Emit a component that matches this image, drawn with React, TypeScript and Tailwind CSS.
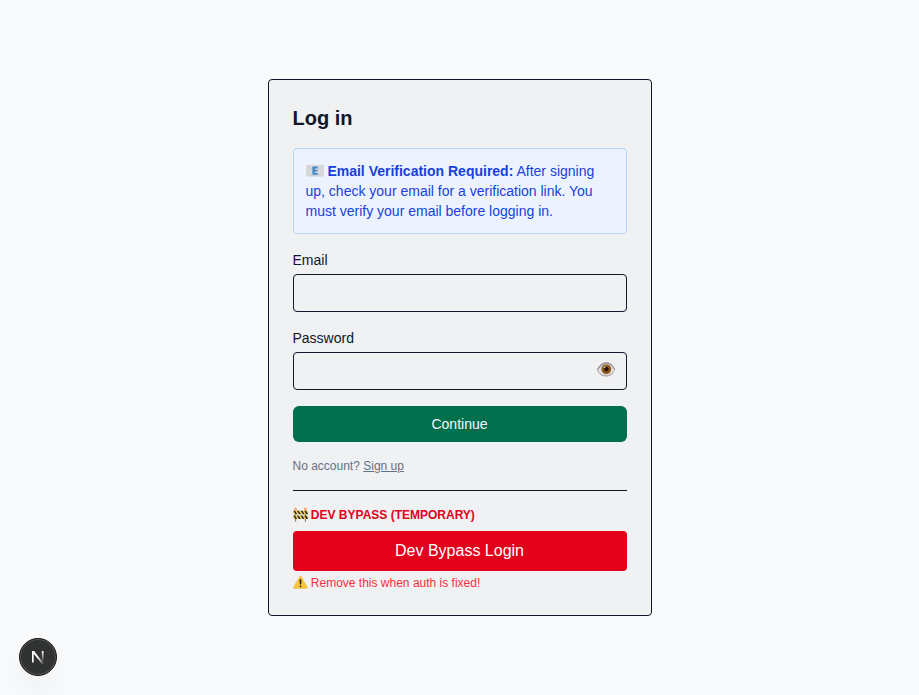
import React from "react";

function MailEmoji() {
  return (
    <svg className="inline-block h-[13px] w-[18px] align-[-1px]" viewBox="0 0 18 13" aria-hidden="true">
      <defs>
        <linearGradient id="paper" x1="0" y1="0" x2="0" y2="1">
          <stop offset="0" stopColor="#dfdfe1" />
          <stop offset="1" stopColor="#d0d0d2" />
        </linearGradient>
      </defs>
      <rect x="0.1" y="0.8" width="17.8" height="11.6" rx="0.8" fill="url(#paper)" />
      <path d="M0.6 12 6.6 6.4M17.4 12 11.2 6.4" stroke="#e9e9ea" strokeWidth="0.8" />
      <path d="M0.6 1.2 7.4 7.8q1.5 1.2 3 0l7-6.6" fill="#d8d8da" stroke="#bdbec0" strokeWidth="0.7" />
      <path d="M6.4 2.6h5.3v1.9H8.8v1.3h2.5v1.7H8.8v1.4h3v1.9H6.4z" fill="#438bcb" />
    </svg>
  );
}

function EyeEmoji() {
  return (
    <svg className="block h-[15px] w-[20px]" viewBox="0 0 20 15" aria-hidden="true">
      <defs>
        <radialGradient id="iris">
          <stop offset="0" stopColor="#30170a" />
          <stop offset="0.4" stopColor="#5b330e" />
          <stop offset="0.78" stopColor="#a56c1b" />
          <stop offset="1" stopColor="#61411f" />
        </radialGradient>
      </defs>
      <path d="M1 7.9C3.5 3.1 6.2.4 10.4.4c4.1 0 6.7 3 8.6 7.1-1.8 4.4-4.6 7-8.9 7-4.5 0-7.4-2.8-9.1-6.6Z" fill="#aea5a6" />
      <path d="M2 8.2C4.2 4.4 6.8 2 10.2 2c3.7 0 6.2 2.4 8 5.7-2 3.7-4.4 5.6-8.1 5.6-3.9 0-6.4-2.2-8.1-5.1Z" fill="#e9e2e3" />
      <circle cx="10.3" cy="7.3" r="4.9" fill="url(#iris)" />
      <circle cx="10.4" cy="6.8" r="2" fill="#29150d" />
      <circle cx="8.5" cy="5.2" r="0.9" fill="#c9bba9" />
      <path d="M1.2 7.7C3.6 3.4 6.4.9 10.4.9c3.8 0 6.3 2.6 8.3 6.6" fill="none" stroke="#857777" strokeWidth="0.8" />
    </svg>
  );
}

function BarrierEmoji() {
  return (
    <svg className="inline-block h-[15px] w-[15px] align-[-3px]" viewBox="0 0 15 15" aria-hidden="true">
      <path d="M2.6 3v11.7M12.4 3v11.7" stroke="#858279" strokeWidth="1.1" />
      <path d="M.2 3.8h14.6v3.5H.2zM.2 8.6h14.6v3.3H.2z" fill="#e8c958" />
      <path d="m.4 3.8 2.1 3.5h1.7L2.1 3.8zM4 3.8l2.1 3.5h1.7L5.7 3.8zM7.7 3.8l2.1 3.5h1.7L9.4 3.8zM11.3 3.8l2.1 3.5h1.4V6.5l-1.8-2.7zM.4 8.6l2 3.3h1.7l-2-3.3zM4 8.6l2 3.3h1.7l-2-3.3zM7.7 8.6l2 3.3h1.7l-2-3.3zM11.3 8.6l2 3.3h1.5v-.8L13 8.6z" fill="#2b2920" />
      <path d="M1.3 3.7V1.9q0-1.5 1.3-1.5t1.3 1.5v1.8zM11.1 3.7V1.9q0-1.5 1.3-1.5t1.3 1.5v1.8z" fill="#f5a568" />
    </svg>
  );
}

function WarningEmoji() {
  return (
    <svg className="inline-block h-[14px] w-[15px] align-[-2px]" viewBox="0 0 15 14" aria-hidden="true">
      <path d="M6.7 1.5q.8-1.2 1.6 0l6.1 10.7q.5 1.2-.8 1.2H1.2q-1.3 0-.8-1.2z" fill="#fac536" stroke="#e5bb61" strokeWidth="0.5" />
      <path d="M6.8 4.7q.7-.6 1.4 0L8 9.2H7z" fill="#2d2920" stroke="#2d2920" strokeWidth="0.5" />
      <circle cx="7.5" cy="11.3" r="0.9" fill="#2d2920" />
    </svg>
  );
}

function DevBadge() {
  return (
    <button
      aria-label="Open Next.js Dev Tools"
      className="fixed bottom-[19px] left-[19px] flex size-[38px] items-center justify-center rounded-full border border-[#171717] bg-[#303331] shadow-[inset_0_0_0_1px_#555756,0_16px_32px_-8px_rgba(0,0,0,0.12)]"
    >
      <svg className="size-[36px] shrink-0" viewBox="0 0 36 36" fill="none" aria-hidden="true">
        <defs>
          <linearGradient id="diag" x1="18" y1="18" x2="24" y2="25.5" gradientUnits="userSpaceOnUse">
            <stop stopColor="#fff" />
            <stop offset="1" stopColor="#fff" stopOpacity="0.1" />
          </linearGradient>
          <linearGradient id="stem" x1="0" y1="12" x2="0" y2="23" gradientUnits="userSpaceOnUse">
            <stop stopColor="#fff" />
            <stop offset="1" stopColor="#fff" stopOpacity="0" />
          </linearGradient>
        </defs>
        <path d="M12 12h2.1l9.5 12.2-1.5 1.1L13.7 14.7V23.5H12Z" fill="url(#diag)" />
        <path d="M22.7 12v10.5" stroke="url(#stem)" strokeWidth="1.8" />
      </svg>
    </button>
  );
}

export default function App() {
  return (
    <main className="flex min-h-screen items-center justify-center bg-[#f8fafc] font-['Liberation_Sans',Arial,sans-serif] text-[#0f172a]">
      <section className="w-full max-w-sm rounded border border-[#0f172a] bg-[#f0f1f3] p-6">
        <h1 className="mb-4 text-xl font-semibold">Log in</h1>
        <div className="mb-4 rounded border border-[#b5d5fb] bg-[#ecf3fe] p-3 text-sm text-[#173fdd]">
          <MailEmoji /> <strong>Email Verification Required:</strong> After signing up, check your email for a
          verification link. You must verify your email before logging in.
        </div>
        <form className="flex flex-col gap-4" onSubmit={(event) => event.preventDefault()}>
          <div className="flex flex-col gap-1">
            <label htmlFor="email" className="text-sm">Email</label>
            <input id="email" type="email" className="h-[38px] w-full rounded border border-[#0f172a] px-3 text-sm" />
          </div>
          <div className="flex flex-col gap-1">
            <label htmlFor="password" className="text-sm">Password</label>
            <div className="flex h-[38px] items-center rounded border border-[#0f172a] pr-[10px] pl-3">
              <input id="password" type="password" className="min-w-0 flex-1 text-sm outline-none" />
              <button type="button" aria-label="Show password" className="pb-[3px]"><EyeEmoji /></button>
            </div>
          </div>
          <button type="submit" className="rounded-md bg-[#006f4c] py-2 text-sm text-[#f8fafc]">Continue</button>
        </form>
        <p className="mt-4 text-xs text-[#667085]">
          No account? <a href="#" className="underline">Sign up</a>
        </p>
        <div className="mt-4 border-t border-[#0f172a] pt-4">
          <p className="mb-2 h-4 text-xs font-bold text-[#e2001a]"><BarrierEmoji /> DEV BYPASS (TEMPORARY)</p>
          <button className="block w-full rounded bg-[#e3001a] py-2 text-base text-white">Dev Bypass Login</button>
          <p className="mt-1 h-4 text-xs text-[#f52f3b]"><WarningEmoji /> Remove this when auth is fixed!</p>
        </div>
      </section>
      <DevBadge />
    </main>
  );
}
